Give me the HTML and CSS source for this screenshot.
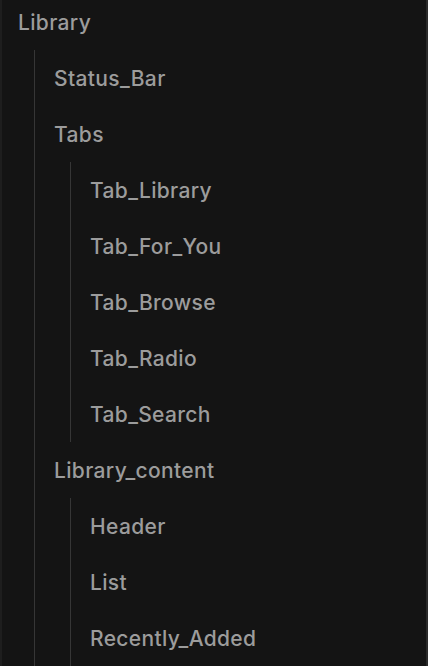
FILE: index.html
```html
<!DOCTYPE html>
<html lang="en">
<head>
<meta charset="utf-8">
<title>Layers</title>
<link rel="stylesheet" href="styles.css">
</head>
<body>
<div class="panel">
  <ul class="tree">
    <li><div class="row">Library</div>
      <ul class="group">
        <li><div class="row">Status_Bar</div></li>
        <li><div class="row">Tabs</div>
          <ul class="group">
            <li><div class="row">Tab_Library</div></li>
            <li><div class="row">Tab_For_You</div></li>
            <li><div class="row">Tab_Browse</div></li>
            <li><div class="row">Tab_Radio</div></li>
            <li><div class="row">Tab_Search</div></li>
          </ul>
        </li>
        <li><div class="row">Library_content</div>
          <ul class="group group-open">
            <li><div class="row">Header</div></li>
            <li><div class="row">List</div></li>
            <li><div class="row">Recently_Added</div></li>
          </ul>
        </li>
      </ul>
    </li>
  </ul>
</div>
</body>
</html>
```
FILE: styles.css
```css
html, body {
  margin: 0;
  padding: 0;
  background: #141414;
  height: 100%;
  overflow: hidden;
}
.panel {
  height: 666px;
  border-left: 2px solid #1e1e1e;
  border-right: 2px solid #2a2a2a;
  box-sizing: border-box;
  overflow: hidden;
}
.tree, .group {
  list-style: none;
  margin: 0;
  padding: 0;
}
.tree {
  margin-top: -6px;
  padding-left: 16px;
}
.group {
  margin-left: 16px;
  border-left: 1px solid #363636;
  padding-left: 19px;
}
.group-open {
  padding-bottom: 20px;
}
.row {
  height: 56px;
  line-height: 57px;
  font-family: Inter, "Noto Sans", sans-serif;
  font-size: 21px;
  font-weight: 500;
  letter-spacing: 0.35px;
  color: #9c9c9c;
  white-space: nowrap;
}
```
